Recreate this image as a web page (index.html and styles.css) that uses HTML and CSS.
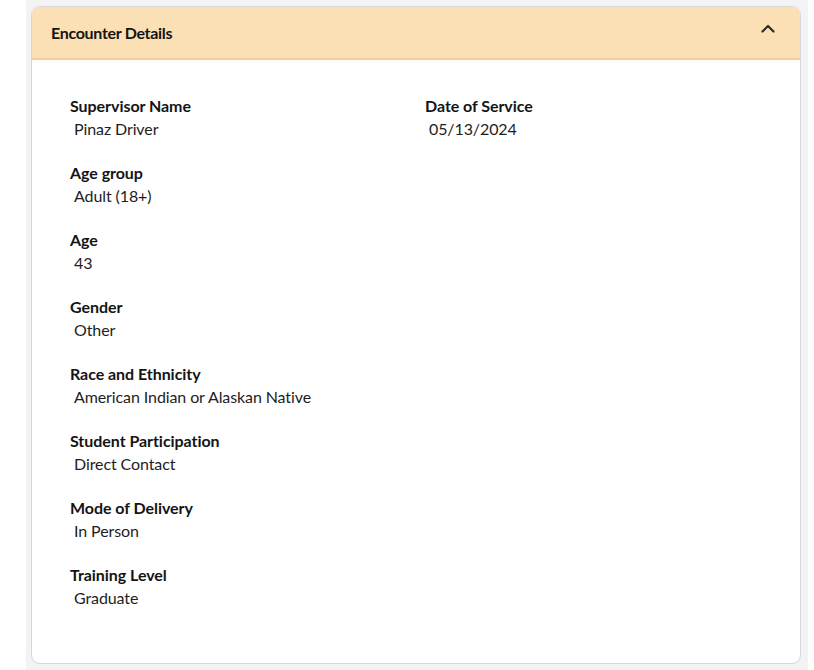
FILE: index.html
```html
<!DOCTYPE html>
<html>
<head>
<meta charset="utf-8">
<link rel="stylesheet" href="styles.css">
</head>
<body>
<div class="wrap">
  <section class="card">
    <header class="card-head">
      <h2 class="title">Encounter Details</h2>
      <svg class="chev" width="14" height="9" viewBox="0 0 14 9"><path d="M1.5 7.5 L7 2 L12.5 7.5" fill="none" stroke="#2b2b2b" stroke-width="2.2" stroke-linecap="round" stroke-linejoin="round"/></svg>
    </header>
    <div class="card-body">
      <div class="col">
        <div class="field"><div class="label">Supervisor Name</div><div class="value">Pinaz Driver</div></div>
        <div class="field"><div class="label">Age group</div><div class="value">Adult (18+)</div></div>
        <div class="field"><div class="label">Age</div><div class="value">43</div></div>
        <div class="field"><div class="label">Gender</div><div class="value">Other</div></div>
        <div class="field"><div class="label">Race and Ethnicity</div><div class="value">American Indian or Alaskan Native</div></div>
        <div class="field"><div class="label">Student Participation</div><div class="value">Direct Contact</div></div>
        <div class="field"><div class="label">Mode of Delivery</div><div class="value">In Person</div></div>
        <div class="field"><div class="label">Training Level</div><div class="value">Graduate</div></div>
      </div>
      <div class="col">
        <div class="field"><div class="label">Date of Service</div><div class="value">05/13/2024</div></div>
      </div>
    </div>
  </section>
</div>
</body>
</html>
```
FILE: styles.css
```css
html, body { margin: 0; padding: 0; background: #ffffff; }
body { font-family: "Lato", "Open Sans", sans-serif; color: #1b1b1b; }
.wrap {
  margin-left: 26px;
  width: 782px;
  background: #f3f3f3;
  padding: 6px 7px 6px 5px;
  box-sizing: border-box;
  height: 670px;
}
.card {
  background: #fff;
  border: 1px solid #d9d9d9;
  border-radius: 9px;
  overflow: hidden;
  height: 658px;
  box-sizing: border-box;
}
.card-head {
  background: #fbe0b5;
  border-bottom: 2px solid #efcf9c;
  height: 51px;
  display: flex;
  align-items: center;
  justify-content: space-between;
  padding: 0 25px 0 19px;
}
.title { margin: 0; font-size: 16px; font-weight: 700; letter-spacing: -0.3px; color: #141414; }
.chev { margin-top: -8px; }
.card-body {
  display: grid;
  grid-template-columns: 355px 1fr;
  padding: 35px 20px 0 38px;
}
.field { margin-bottom: 21px; }
.label { font-size: 16px; font-weight: 700; letter-spacing: -0.05px; line-height: 22px; color: #141414; }
.value { font-size: 16px; line-height: 24px; padding-left: 4px; color: #1e1e1e; letter-spacing: -0.1px; }
```
